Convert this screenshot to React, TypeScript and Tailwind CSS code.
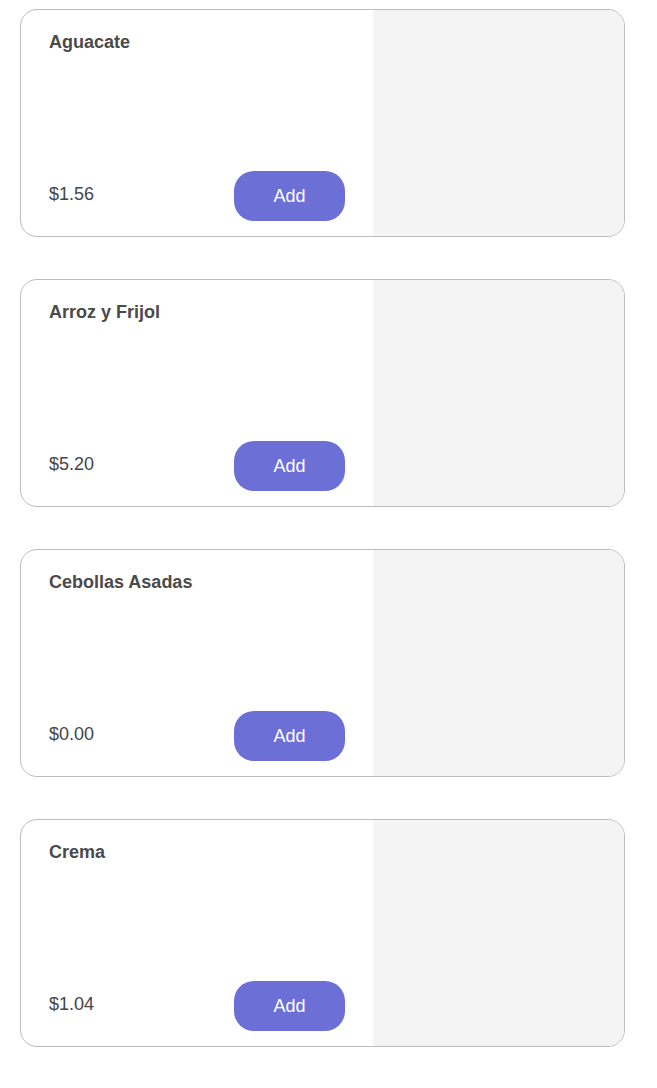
const items = [
  { name: "Aguacate", price: "$1.56" },
  { name: "Arroz y Frijol", price: "$5.20" },
  { name: "Cebollas Asadas", price: "$0.00" },
  { name: "Crema", price: "$1.04" },
];

function ItemCard({ name, price }: { name: string; price: string }) {
  return (
    <div className="flex h-[228px] overflow-hidden rounded-[17px] border border-[#bdbdbd] bg-white">
      <div className="flex w-[352px] flex-col justify-between pb-[15px] pl-[28px] pr-[28px] pt-[20px]">
        <div className="text-[18px] font-bold leading-[24px] text-[#4a4a4a]">{name}</div>
        <div className="flex items-center justify-between">
          <span className="-mt-[4px] text-[18px] text-[#454545]">{price}</span>
          <button className="h-[50px] w-[111px] rounded-[20px] bg-[#6b6fd6] text-[18px] font-light text-white">
            Add
          </button>
        </div>
      </div>
      <div className="flex-1 bg-[#f4f4f4]" />
    </div>
  );
}

export default function App() {
  return (
    <div className="min-h-[1088px] bg-white pt-[9px]" style={{ fontFamily: '"Liberation Sans", Arial, sans-serif' }}>
      <div className="ml-[20px] flex w-[605px] flex-col gap-[42px]">
        {items.map((item) => (
          <ItemCard key={item.name} name={item.name} price={item.price} />
        ))}
      </div>
    </div>
  );
}
